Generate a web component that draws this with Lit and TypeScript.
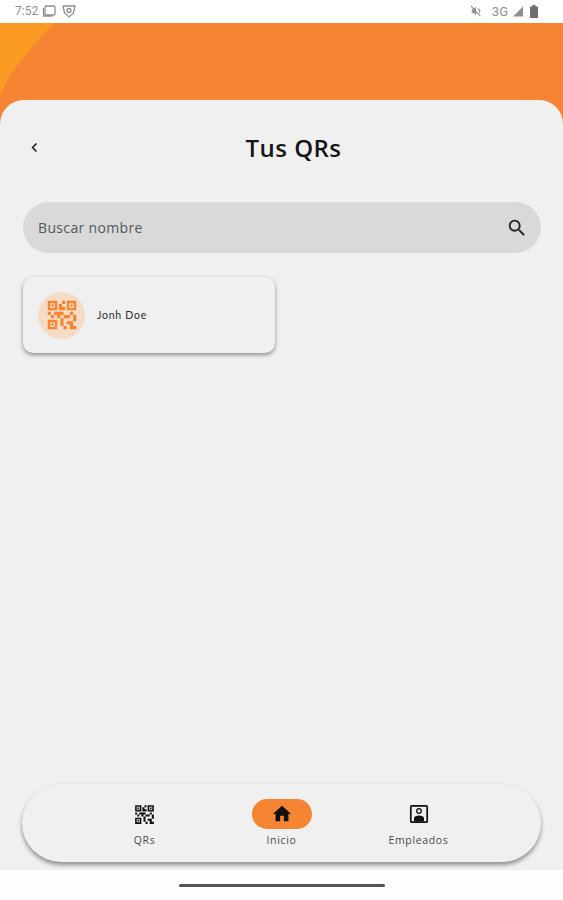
import { LitElement, html, css, svg } from "lit";
import { customElement } from "lit/decorators.js";

const QR = svg`<path d="M15,21h-2v-2h2V21z M13,14h-2v5h2V14z M21,12h-2v4h2V12z M19,10h-2v2h2V10z M7,12H5v2h2V12z M5,10H3v2h2V10z M12,5h2V3h-2V5z M4.5,4.5v3h3v-3H4.5z M9,9H3V3h6V9z M4.5,16.5v3h3v-3H4.5z M9,21H3v-6h6V21z M16.5,4.5v3h3v-3H16.5z M21,9h-6V3h6V9z M19,19v-3l-4,0v2h2v3h4v-2H19z M17,12l-4,0v2h4V12z M13,10H7v2h2v2h2v-2h2V10z M14,9V7h-2V5h-2v4L14,9z M6.75,5.25h-1.5v1.5h1.5V5.25z M6.75,17.25h-1.5v1.5h1.5V17.25z M18.75,5.25h-1.5v1.5h1.5V5.25z"/>`;

@customElement("app-root")
export class AppRoot extends LitElement {
  static styles = css`
    :host { display: block; width: 563px; height: 900px; overflow: hidden; background: #fff; font-family: "Open Sans", "Noto Sans", sans-serif; }
    .page { height: 900px; display: flex; flex-direction: column; }
    .status { height: 23px; flex: none; display: flex; align-items: center; justify-content: space-between; padding: 0 25px 1px 15px; box-sizing: border-box; color: #8f8f8f; background: #fff; }
    .status-group { display: flex; align-items: center; }
    .time { font: 12px Roboto, sans-serif; margin-right: 4px; }
    .shield { margin-left: 6px; }
    .net { font: 13px Roboto, sans-serif; margin: 0 5px 0 10px; }
    .battery { margin-left: 7px; }
    .hero { flex: 1; min-height: 0; position: relative; background: #f68533; padding-top: 77px; display: flex; flex-direction: column; }
    .corner { position: absolute; left: 0; top: 0; }
    .sheet { position: relative; flex: 1; display: flex; flex-direction: column; min-height: 0; background: #f0f0f0; border-radius: 24px 24px 0 0; padding: 0 22px 8px 23px; }
    .header { display: flex; align-items: center; height: 48px; margin-top: 24px; }
    .back { width: 23px; flex: none; display: flex; }
    .title { flex: 1; margin: 0; text-align: center; font-size: 24px; font-weight: 600; color: #151515; letter-spacing: 0.45px; line-height: 48px; }
    .search { height: 51px; margin-top: 30px; border-radius: 26px; background: #d9d9d9; display: flex; align-items: center; justify-content: space-between; padding: 0 13px 0 15px; color: #55585a; font-size: 14px; letter-spacing: 0.35px; }
    .cards { display: grid; grid-template-columns: repeat(2, 1fr); gap: 14px; margin-top: 24px; flex: 1; align-content: start; }
    .card { height: 76px; display: flex; align-items: center; gap: 12px; padding: 0 15px; border-radius: 10px; background: #f0f0f0; box-shadow: 0 2px 4px rgba(0,0,0,.42); }
    .avatar { width: 47px; height: 47px; border-radius: 50%; background: #f6dcc6; display: flex; align-items: center; justify-content: center; }
    .avatar svg { fill: #f68533; }
    .name { font: 10.5px Lato, sans-serif; color: #2c2c2c; letter-spacing: 0.75px; }
    .nav { height: 78px; flex: none; border-radius: 39px; background: #f0f0f0; box-shadow: 0 3px 4px rgba(0,0,0,.4); display: grid; grid-template-columns: repeat(3, 137px); justify-content: center; padding-top: 15px; box-sizing: border-box; margin-left: -1px; }
    .item { display: flex; flex-direction: column; align-items: center; gap: 4px; font-size: 10.5px; line-height: 14px; letter-spacing: 0.65px; color: #4a4a4a; }
    .pill { width: 60px; height: 30px; border-radius: 15px; display: flex; align-items: center; justify-content: center; }
    .active { background: #f68533; }
    .gesture { height: 30px; flex: none; background: #fdfdfd; display: flex; align-items: center; justify-content: center; }
    .handle { width: 206px; height: 3px; border-radius: 2px; background: #555; }
    svg { display: block; }
  `;

  render() {
    return html`<div class="page">
      <div class="status">
        <div class="status-group">
          <span class="time">7:52</span>
          <svg width="14" height="13" viewBox="0 0 14 13" fill="none" stroke="#8f8f8f" stroke-width="1.3"><rect x="3" y="1" width="10" height="9" rx="1"/><path d="M1.500 3v8h9"/></svg>
          <svg class="shield" width="14" height="14" viewBox="0 0 14 14" fill="none" stroke="#8f8f8f" stroke-width="1.300"><path d="M1 2h12l-1.500 7L7 13 2.500 9z"/><circle cx="7" cy="6.500" r="2"/></svg>
        </div>
        <div class="status-group">
          <svg width="12" height="12" viewBox="0 0 14 14" fill="#8f8f8f"><path d="M2 5h2l3-3v10l-3-3H2z"/><path d="M9 4a4 4 0 0 1 2 5M1 1l11 12" fill="none" stroke="#8f8f8f" stroke-width="1.300"/></svg>
          <span class="net">3G</span>
          <svg width="10" height="11" viewBox="0 0 11 11" fill="#8f8f8f"><path d="M11 0v11H0z"/></svg>
          <svg class="battery" width="8" height="13" viewBox="0 0 8 13" fill="#6f6f6f"><path d="M2.500 0h3v1.500H8V13H0V1.500h2.500z"/></svg>
        </div>
      </div>
      <div class="hero">
        <svg class="corner" width="58" height="74" viewBox="0 0 58 74"><path d="M0 0h56C40 13 30 26 21 38C12 48 6 60 0 72z" fill="#fb9a22"/></svg>
        <div class="sheet">
          <div class="header">
            <div class="back"><svg width="22" height="22" viewBox="0 0 22 22" fill="none" stroke="#151515" stroke-width="1.500"><path d="M13.500 6.500l-4 4 4 4"/></svg></div>
            <h1 class="title">Tus QRs</h1>
          </div>
          <div class="search">
            <span>Buscar nombre</span>
            <svg width="22" height="22" viewBox="0 0 24 24" fill="#222"><path d="M15.500 14h-.79l-.28-.27A6.470 6.470 0 0 0 16 9.500 6.500 6.500 0 1 0 9.500 16c1.610 0 3.090-.59 4.230-1.570l.27.28v.79l5 4.990L20.490 19l-4.990-5zm-6 0C7.010 14 5 11.990 5 9.500S7.010 5 9.500 5 14 7.010 14 9.500 11.990 14 9.500 14z"/></svg>
          </div>
          <div class="cards">
            <div class="card">
              <div class="avatar"><svg width="38" height="38" viewBox="0 0 24 24">${QR}</svg></div>
              <span class="name">Jonh Doe</span>
            </div>
          </div>
          <nav class="nav">
            <div class="item"><div class="pill"><svg width="25" height="25" viewBox="0 0 24 24" fill="#111">${QR}</svg></div><span>QRs</span></div>
            <div class="item"><div class="pill active"><svg width="22" height="22" viewBox="0 0 24 24" fill="#111"><path d="M10 20v-6h4v6h5v-8h3L12 3 2 12h3v8z"/></svg></div><span>Inicio</span></div>
            <div class="item"><div class="pill"><svg width="24" height="24" viewBox="0 0 24 24" fill="none"><rect x="3.800" y="3.800" width="16.400" height="16.400" rx="1" stroke="#111" stroke-width="1.700"/><circle cx="12" cy="9" r="2.300" stroke="#111" stroke-width="1.300"/><path d="M7 19.500v-3.500c0-1.500 2.500-2.500 5-2.500s5 1 5 2.500v3.500z" fill="#111"/></svg></div><span>Empleados</span></div>
          </nav>
        </div>
      </div>
      <div class="gesture"><div class="handle"></div></div>
    </div>`;
  }
}
